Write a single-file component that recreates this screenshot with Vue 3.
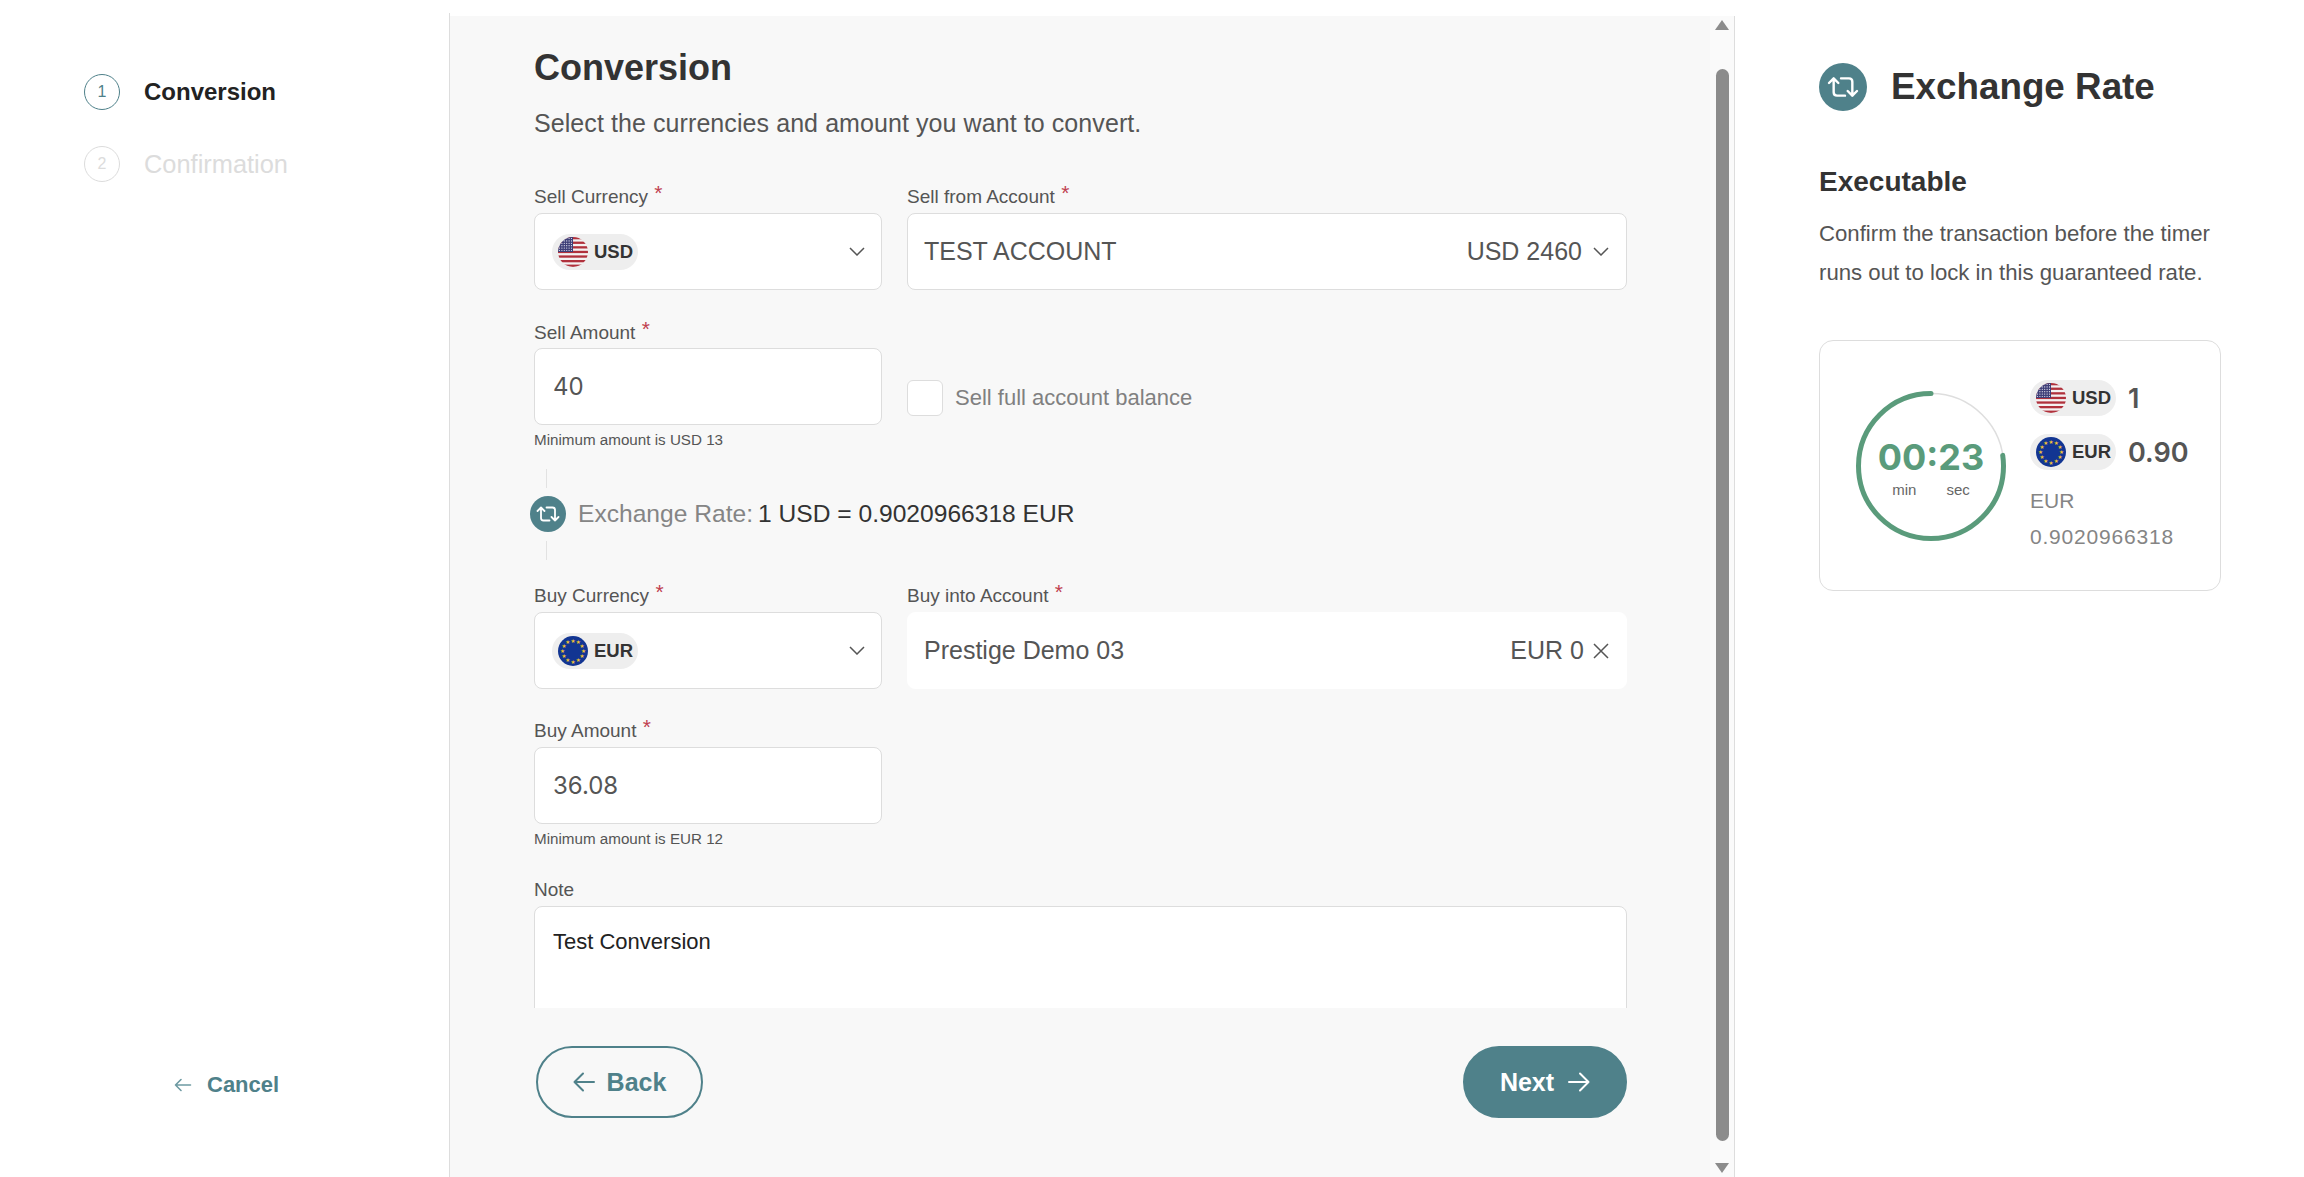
<template>
  <svg class="defs" width="0" height="0" aria-hidden="true">
    <defs>
      <clipPath id="flag-clip"><circle cx="15" cy="15" r="15" /></clipPath>
      <g id="flag-usd" clip-path="url(#flag-clip)">
        <rect width="30" height="30" fill="#f4f2f2" />
        <rect v-for="y in usStripes" :key="y" x="0" :y="y" width="30" height="2.3" fill="#b0313c" />
        <rect width="15" height="15" fill="#3f3f78" />
        <circle v-for="d in usDots" :key="d.x + '-' + d.y" :cx="d.x" :cy="d.y" r="0.6" fill="#e8e8f2" />
      </g>
      <g id="flag-eur">
        <circle cx="15" cy="15" r="15" fill="#123592" />
        <text
          v-for="s in euStars"
          :key="s.x + '-' + s.y"
          :x="s.x"
          :y="s.y + 2"
          text-anchor="middle"
          font-size="5.6"
          fill="#f2c632"
          font-family="DejaVu Sans"
        >★</text>
      </g>
      <g id="swap" fill="none" stroke="#fff" stroke-width="1.800" stroke-linecap="round" stroke-linejoin="round">
        <path d="M1.500 9 5 5.500 8.500 9M5 5.500V16q0 2.500 2.500 2.500H13.500" />
        <path d="M22.500 15 19 18.500 15.500 15M19 18.500V8q0-2.500-2.500-2.500H10.500" />
      </g>
    </defs>
  </svg>

  <div class="page">
    <aside class="steps">
      <div class="step-list">
        <div class="step active">
          <span class="num">1</span>
          <span class="step-name">Conversion</span>
        </div>
        <div class="step">
          <span class="num">2</span>
          <span class="step-name">Confirmation</span>
        </div>
      </div>
      <a class="cancel">
        <svg width="18" height="14" viewBox="0 0 18 14" fill="none" stroke="#6d9aa2" stroke-width="1.600" stroke-linecap="round" stroke-linejoin="round">
          <path d="M16.500 7H1.500M7 1.500 1.500 7 7 12.500" />
        </svg>
        Cancel
      </a>
    </aside>

    <main class="center">
      <div class="content">
        <div class="form-wrap">
          <h1>Conversion</h1>
          <p class="lead">Select the currencies and amount you want to convert.</p>

          <div class="row first">
            <div>
              <label>Sell Currency <i>*</i></label>
              <div class="field select">
                <span class="pill"><svg width="30" height="30"><use href="#flag-usd" /></svg>USD</span>
                <svg class="chev" width="16" height="9" viewBox="0 0 16 9"><path d="M1 1l7 7 7-7" /></svg>
              </div>
            </div>
            <div>
              <label>Sell from Account <i>*</i></label>
              <div class="field account">
                <span>TEST ACCOUNT</span>
                <span class="acc-right">USD 2460
                  <svg class="chev" width="16" height="9" viewBox="0 0 16 9"><path d="M1 1l7 7 7-7" /></svg>
                </span>
              </div>
            </div>
          </div>

          <div class="row next">
            <div>
              <label>Sell Amount <i>*</i></label>
              <div class="field amount">40</div>
              <div class="hint">Minimum amount is USD 13</div>
            </div>
            <div class="check-cell">
              <span class="check"></span>
              <span class="check-label">Sell full account balance</span>
            </div>
          </div>

          <div class="rate">
            <span class="rate-line"></span>
            <div class="rate-row">
              <span class="swap small"><svg width="24" height="24" viewBox="0 0 24 24"><use href="#swap" /></svg></span>
              <span class="rate-label">Exchange Rate:</span>
              <span class="rate-value">1 USD = 0.9020966318 EUR</span>
            </div>
            <span class="rate-line"></span>
          </div>

          <div class="row">
            <div>
              <label>Buy Currency <i>*</i></label>
              <div class="field select">
                <span class="pill"><svg width="30" height="30"><use href="#flag-eur" /></svg>EUR</span>
                <svg class="chev" width="16" height="9" viewBox="0 0 16 9"><path d="M1 1l7 7 7-7" /></svg>
              </div>
            </div>
            <div>
              <label>Buy into Account <i>*</i></label>
              <div class="field account plain">
                <span>Prestige Demo 03</span>
                <span class="acc-right">EUR 0
                  <svg class="x" width="18" height="18" viewBox="0 0 18 18"><path d="M2 2l14 14M16 2 2 16" /></svg>
                </span>
              </div>
            </div>
          </div>

          <div class="row buy-amount">
            <div>
              <label>Buy Amount <i>*</i></label>
              <div class="field amount">36.08</div>
              <div class="hint">Minimum amount is EUR 12</div>
            </div>
          </div>

          <div class="note">
            <label>Note</label>
            <div class="field textarea">Test Conversion</div>
          </div>
        </div>

        <div class="actions">
          <button class="btn back">
            <svg width="22" height="20" viewBox="0 0 22 20" fill="none" stroke="#4f818a" stroke-width="2" stroke-linecap="round" stroke-linejoin="round">
              <path d="M21 10H1.500M10 1.500 1.500 10 10 18.500" />
            </svg>
            Back
          </button>
          <button class="btn primary">
            Next
            <svg width="22" height="20" viewBox="0 0 22 20" fill="none" stroke="#fff" stroke-width="2" stroke-linecap="round" stroke-linejoin="round">
              <path d="M1 10h19.500M12 1.500 20.500 10 12 18.500" />
            </svg>
          </button>
        </div>
      </div>

      <div class="scroll">
        <span class="tri up"></span>
        <span class="thumb"></span>
        <span class="tri down"></span>
      </div>
    </main>

    <aside class="side">
      <div class="side-head">
        <span class="swap big"><svg width="32" height="32" viewBox="0 0 24 24"><use href="#swap" /></svg></span>
        <h2>Exchange Rate</h2>
      </div>
      <h3>Executable</h3>
      <p class="side-text">Confirm the transaction before the timer runs out to lock in this guaranteed rate.</p>

      <div class="card">
        <div class="timer">
          <svg class="ring" width="150" height="150" viewBox="0 0 150 150">
            <circle cx="75" cy="75" r="72.500" fill="none" stroke="#dedede" stroke-width="1.500" />
            <circle
              cx="75"
              cy="75"
              r="72.500"
              fill="none"
              stroke="#5a9b7b"
              stroke-width="5"
              stroke-linecap="round"
              :stroke-dasharray="`${ringLength} 1000`"
              transform="rotate(-90 75 75) scale(1 -1) translate(0 -150)"
            />
          </svg>
          <div class="time">00:23</div>
          <div class="units"><span>min</span><span>sec</span></div>
        </div>
        <div class="quote">
          <div class="quote-row">
            <span class="pill"><svg width="30" height="30"><use href="#flag-usd" /></svg>USD</span>
            <b>1</b>
          </div>
          <div class="quote-row">
            <span class="pill"><svg width="30" height="30"><use href="#flag-eur" /></svg>EUR</span>
            <b>0.90</b>
          </div>
          <div class="quote-full">EUR<br /><span class="full-rate">0.9020966318</span></div>
        </div>
      </div>
    </aside>
  </div>
</template>

<script setup>
  import { computed } from 'vue'

  const usStripes = [0, 4.6, 9.2, 13.8, 18.4, 23, 27.6]

  const usDots = []
  for (let row = 0; row < 6; row++) {
    for (let col = 0; col < 6; col++) {
      usDots.push({ x: 1.5 + col * 2.4, y: 1.5 + row * 2.4 })
    }
  }

  const euStars = Array.from({ length: 12 }, (_, i) => {
    const a = (i / 12) * Math.PI * 2
    return {
      x: +(15 + Math.cos(a) * 10.5).toFixed(2),
      y: +(15 + Math.sin(a) * 10.5).toFixed(2)
    }
  })

  // 23 of 30 seconds left, runs counter clockwise from the top
  const ringLength = computed(() => ((2 * Math.PI * 72.5 * 278) / 360).toFixed(1))
</script>

<style scoped>
  .defs {
    position: absolute;
  }

  .page {
    display: flex;
    height: 1177px;
    overflow: hidden;
    background: #fff;
    color: #333;
    font-family: "Liberation Sans", Arial, sans-serif;
  }

  .steps {
    box-sizing: border-box;
    width: 450px;
    height: 1164px;
    margin-top: 13px;
    padding: 61px 0 0 84px;
    border-right: 1px solid #ddd;
    display: flex;
    flex-direction: column;
    justify-content: space-between;
  }

  .step-list {
    display: flex;
    flex-direction: column;
    gap: 36px;
  }

  .step {
    display: flex;
    align-items: center;
    gap: 24px;
    color: #dcdcdc;
  }

  .num {
    box-sizing: border-box;
    width: 36px;
    height: 36px;
    border: 1px solid #dcdcdc;
    border-radius: 50%;
    display: flex;
    align-items: center;
    justify-content: center;
    font-size: 16px;
  }

  .step-name {
    font-size: 25.400px;
  }

  .active {
    color: #222;
  }

  .active .num {
    border-color: #4f818a;
    color: #4f818a;
  }

  .active .step-name {
    font-size: 24px;
    font-weight: 700;
  }

  .cancel {
    display: flex;
    align-items: center;
    gap: 15px;
    margin: 0 0 79px 90px;
    color: #4f818a;
    font-size: 22px;
    font-weight: 700;
  }

  .center {
    flex: none;
    box-sizing: border-box;
    width: 1285px;
    height: 1161px;
    margin-top: 16px;
    background: #f8f8f8;
    display: flex;
    border-right: 1px solid #ddd;
  }

  .content {
    width: 1260px;
    display: flex;
    flex-direction: column;
  }

  .form-wrap {
    box-sizing: border-box;
    height: 992px;
    overflow: hidden;
    padding: 30px 0 0 84px;
    width: 1177px;
  }

  h1 {
    margin: 0;
    font-size: 36px;
    line-height: 44px;
    font-weight: 700;
    color: #333;
  }

  .lead {
    margin: 17px 0 0;
    font-size: 25px;
    letter-spacing: 0.08px;
    line-height: 32px;
    color: #555;
  }

  .row {
    display: grid;
    grid-template-columns: 348px 720px;
    column-gap: 25px;
  }

  .row.first {
    margin-top: 46px;
  }

  .row.next {
    margin-top: 31px;
  }

  .row.next label {
    margin-bottom: 3px;
  }

  .row.buy-amount {
    margin-top: 30px;
  }

  label {
    display: block;
    height: 24px;
    margin-bottom: 4px;
    font-size: 19px;
    line-height: 24px;
    color: #555;
  }

  label i {
    color: #c0404f;
    font-size: 21px;
    line-height: 0;
    font-style: normal;
    margin-left: 1px;
    position: relative;
    top: -3px;
  }

  .field {
    box-sizing: border-box;
    height: 77px;
    border: 1px solid #ddd;
    border-radius: 8px;
    background: #fff;
    padding: 0 18px 0 17px;
    display: flex;
    align-items: center;
    font-size: 25px;
    color: #555;
  }

  .select {
    justify-content: space-between;
    padding-right: 16px;
  }

  .account {
    justify-content: space-between;
    padding: 0 17px 0 16px;
  }

  .plain {
    border-color: #fff;
    padding-right: 16px;
  }

  .plain .acc-right {
    gap: 8px;
  }

  .acc-right {
    display: flex;
    align-items: center;
    gap: 11px;
  }

  .chev,
  .x {
    fill: none;
    stroke: #555;
    stroke-width: 1.500;
  }

  .amount {
    font-family: Inter, "Liberation Sans", sans-serif;
    font-size: 24px;
    padding-left: 18px;
  }

  .hint {
    margin-top: 5px;
    font-size: 15.200px;
    line-height: 20px;
    color: #555;
  }

  .pill {
    display: inline-flex;
    align-items: center;
    gap: 6px;
    height: 36px;
    padding: 0 5px 0 6px;
    border-radius: 18px;
    background: #eee;
    font-size: 18.500px;
    font-weight: 700;
    color: #333;
  }

  .check-cell {
    display: flex;
    align-items: flex-start;
    gap: 12px;
    padding-top: 59px;
  }

  .check {
    box-sizing: border-box;
    width: 36px;
    height: 36px;
    border: 1px solid #ddd;
    border-radius: 6px;
    background: #fff;
  }

  .check-label {
    font-size: 22px;
    line-height: 36px;
    color: #808080;
  }

  .rate {
    margin: 19px 0 24px -4px;
  }

  .rate-line {
    display: block;
    width: 1px;
    height: 19px;
    margin-left: 16px;
    background: #e2e2e2;
  }

  .rate-row {
    display: flex;
    align-items: center;
    height: 36px;
    margin: 8px 0 9px;
    font-size: 24.600px;
  }

  .swap {
    display: flex;
    align-items: center;
    justify-content: center;
    border-radius: 50%;
    background: #4f818a;
  }

  .swap.small {
    width: 36px;
    height: 36px;
    margin-right: 12px;
  }

  .swap.big {
    width: 48px;
    height: 48px;
  }

  .rate-label {
    color: #858585;
  }

  .rate-value {
    margin-left: 5px;
    color: #333;
  }

  .note {
    margin-top: 29px;
  }

  .note label {
    margin-bottom: 4px;
  }

  .textarea {
    height: 130px;
    align-items: flex-start;
    padding: 22px 18px 0;
    font-size: 22px;
    color: #222;
    border-radius: 8px;
  }

  .actions {
    display: flex;
    justify-content: space-between;
    width: 1091px;
    margin: 38px 0 0 86px;
  }

  .btn {
    height: 72px;
    border-radius: 36px;
    border: 2px solid #4f818a;
    display: flex;
    align-items: center;
    justify-content: center;
    gap: 12px;
    font: 700 25px "Liberation Sans", Arial, sans-serif;
    background: transparent;
    color: #4f818a;
    padding: 0;
  }

  .back {
    width: 167px;
  }

  .primary {
    width: 164px;
    gap: 14px;
    background: #4f818a;
    color: #fff;
  }

  .scroll {
    width: 24px;
    background: #fafafa;
    display: flex;
    flex-direction: column;
    align-items: center;
    padding: 4px 0 4px;
    box-sizing: border-box;
  }

  .tri {
    width: 0;
    height: 0;
    border-left: 7.500px solid transparent;
    border-right: 7.500px solid transparent;
  }

  .tri.up {
    border-bottom: 10px solid #8c8c8c;
  }

  .tri.down {
    border-top: 10px solid #8c8c8c;
  }

  .thumb {
    width: 13px;
    flex: 1;
    margin: 39px 0 22px;
    border-radius: 7px;
    background: #8c8c8c;
  }

  .side {
    padding: 63px 0 0 84px;
    width: 402px;
  }

  .side-head {
    display: flex;
    align-items: center;
    gap: 24px;
    height: 48px;
  }

  h2 {
    margin: 0;
    font-size: 36.800px;
    font-weight: 700;
    color: #333;
  }

  h3 {
    margin: 53px 0 0;
    font-size: 28px;
    line-height: 36px;
    font-weight: 700;
    color: #333;
  }

  .side-text {
    margin: 14px 0 0;
    font-size: 22.200px;
    line-height: 39px;
    color: #555;
  }

  .card {
    box-sizing: border-box;
    display: flex;
    gap: 24px;
    width: 402px;
    height: 251px;
    margin-top: 48px;
    padding: 39px 0 0 36px;
    border: 1px solid #ddd;
    border-radius: 14px;
  }

  .timer {
    position: relative;
    width: 150px;
    height: 150px;
    margin-top: 11px;
    flex: none;
    text-align: center;
  }

  .ring {
    position: absolute;
    left: 0;
    top: 0;
  }

  .time {
    padding-top: 44px;
    font-family: Inter, "Liberation Sans", sans-serif;
    font-size: 36px;
    line-height: 44px;
    font-weight: 700;
    color: #5a9b7b;
  }

  .units {
    display: flex;
    justify-content: center;
    gap: 30px;
    margin-top: 1px;
    font-size: 15px;
    line-height: 20px;
    color: #666;
  }

  .quote {
    flex: 1;
  }

  .quote-row {
    display: flex;
    align-items: center;
    gap: 12px;
    height: 36px;
    margin-bottom: 18px;
  }

  .quote-row b {
    font-family: Inter, "Liberation Sans", sans-serif;
    font-size: 27px;
    font-weight: 600;
    color: #555;
  }

  .quote-full {
    margin-top: -10px;
    padding-top: 5px;
    font-size: 21px;
    line-height: 36px;
    color: #858585;
  }

  .full-rate {
    letter-spacing: 0.8px;
  }
</style>
